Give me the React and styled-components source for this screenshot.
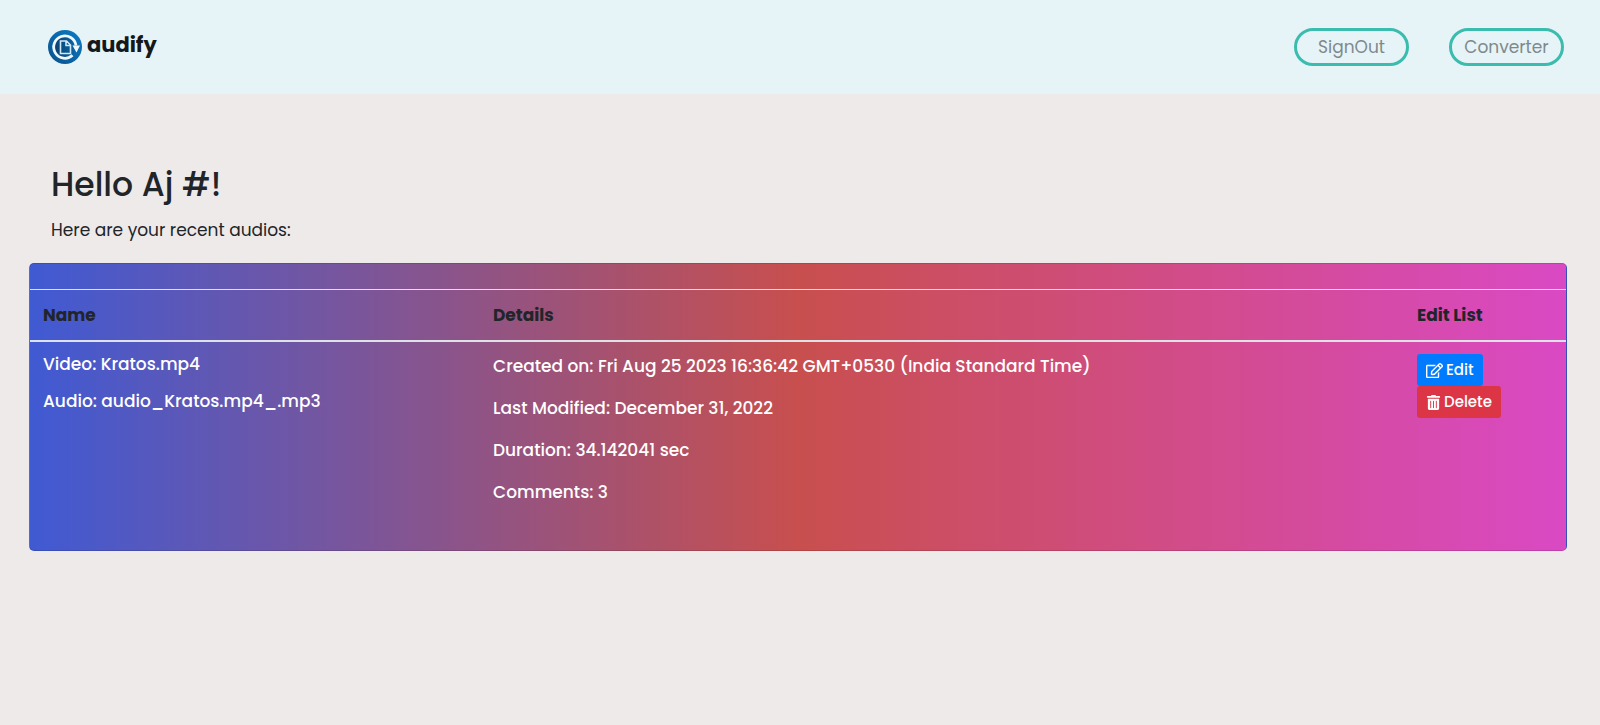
import React from "react";
import styled, { createGlobalStyle } from "styled-components";
import { FaRegEdit, FaTrashAlt } from "react-icons/fa";

const GlobalStyle = createGlobalStyle`
  *, *::before, *::after { box-sizing: border-box; }
  body {
    margin: 0;
    min-height: 100vh;
    background: #eeeae9;
    color: #212529;
    font: 400 16px/24px Poppins, Inter, sans-serif;
  }
`;

const Header = styled.header`
  display: flex;
  align-items: center;
  justify-content: space-between;
  padding: 28px 36px 28px 48px;
  background: #e6f4f8;
`;

const Brand = styled.a`
  display: flex;
  align-items: flex-start;
  gap: 5px;
  color: #15191c;
  font-size: 21px;
  font-weight: 700;
  line-height: 30px;
  text-decoration: none;
  svg { flex: none; }
`;

const Nav = styled.nav`
  display: flex;
  gap: 40px;
`;

const PillButton = styled.button`
  width: 115px;
  height: 38px;
  padding: 0;
  border: 3px solid #3bbcae;
  border-radius: 20px;
  background: transparent;
  color: #7f898b;
  font: inherit;
  font-size: 17px;
`;

const Main = styled.main`
  padding: 64px 33px 0 29px;
`;

const Intro = styled.section`
  padding: 0 22px;
`;

const Title = styled.h1`
  margin: 0 0 6px;
  font-size: 33px;
  font-weight: 500;
  line-height: 54px;
`;

const Lead = styled.p`
  margin: 0;
  font-size: 17px;
`;

const Card = styled.section`
  margin-top: 21px;
  padding: 25px 0 16px;
  border: 1px solid rgba(0, 0, 0, 0.125);
  border-radius: 5px;
  background: linear-gradient(90deg, #405ad3 0%, #c84f4e 50%, #da49c4 100%);
`;

const Table = styled.table`
  width: 100%;
  border-collapse: collapse;
  table-layout: fixed;
`;

const HeadCell = styled.th`
  width: ${(p) => p.$width || "auto"};
  padding: 12px 13px;
  border-top: 1px solid #dee2e6;
  border-bottom: 2px solid #dee2e6;
  font-size: 17px;
  font-weight: 700;
  line-height: 26px;
  text-align: left;
`;

const Cell = styled.td`
  padding: 12px 13px;
  color: #fff;
  font-size: 17px;
  font-weight: 500;
  vertical-align: top;
`;

const NameLine = styled.p`
  margin: 0 0 17px;
  line-height: 20px;
`;

const DetailLine = styled.p`
  margin: 0 0 17px;
  line-height: 25px;
`;

const Actions = styled.div`
  display: flex;
  flex-direction: column;
  align-items: flex-start;
`;

const ActionButton = styled.button`
  display: flex;
  align-items: center;
  gap: 3px;
  height: 32px;
  padding: 0 9px;
  border: 0;
  border-radius: 3px;
  background: ${(p) => p.$color};
  color: #fff;
  font: inherit;
  font-size: 15px;
`;

const Logo = () => (
  <svg width="34" height="34" viewBox="0 0 34 34" aria-hidden="true">
    <defs>
      <linearGradient id="rim" x1="0" y1="1" x2="1" y2="0">
        <stop offset="0" stopColor="#08518c" />
        <stop offset="1" stopColor="#0c7cc6" />
      </linearGradient>
      <linearGradient id="core" x1="0" y1="0" x2="1" y2="0">
        <stop offset="0" stopColor="#0a3f70" />
        <stop offset="1" stopColor="#0b66a8" />
      </linearGradient>
    </defs>
    <circle cx="17" cy="17" r="17" fill="url(#rim)" />
    <circle cx="17" cy="17" r="11" fill="url(#core)" />
    <path d="M28 15.500A11.200 11.200 0 1 0 24.500 25.300" fill="none" stroke="#eef8fc" strokeWidth="2.800" />
    <path d="M24.500 15.500h7.500l-3.500 7z" fill="#eef8fc" />
    <path d="M12.500 11h6l4 4v8.500h-10zM18 11v4.500h4.500" fill="none" stroke="#cfe8f5" strokeWidth="1.600" />
  </svg>
);

const details = [
  "Created on: Fri Aug 25 2023 16:36:42 GMT+0530 (India Standard Time)",
  "Last Modified: December 31, 2022",
  "Duration: 34.142041 sec",
  "Comments: 3",
];

export default function App() {
  return (
    <>
      <GlobalStyle />
      <Header>
        <Brand href="#">
          <Logo />
          audify
        </Brand>
        <Nav>
          <PillButton type="button">SignOut</PillButton>
          <PillButton type="button">Converter</PillButton>
        </Nav>
      </Header>
      <Main>
        <Intro>
          <Title>Hello Aj #!</Title>
          <Lead>Here are your recent audios:</Lead>
        </Intro>
        <Card>
          <Table>
            <thead>
              <tr>
                <HeadCell $width="450px">Name</HeadCell>
                <HeadCell>Details</HeadCell>
                <HeadCell $width="162px">Edit List</HeadCell>
              </tr>
            </thead>
            <tbody>
              <tr>
                <Cell>
                  <NameLine>Video: Kratos.mp4</NameLine>
                  <NameLine>Audio: audio_Kratos.mp4_.mp3</NameLine>
                </Cell>
                <Cell>
                  {details.map((text) => (
                    <DetailLine key={text}>{text}</DetailLine>
                  ))}
                </Cell>
                <Cell>
                  <Actions>
                    <ActionButton type="button" $color="#007bff">
                      <FaRegEdit size={17} /> Edit
                    </ActionButton>
                    <ActionButton type="button" $color="#dc3545">
                      <FaTrashAlt size={15} /> Delete
                    </ActionButton>
                  </Actions>
                </Cell>
              </tr>
            </tbody>
          </Table>
        </Card>
      </Main>
    </>
  );
}
